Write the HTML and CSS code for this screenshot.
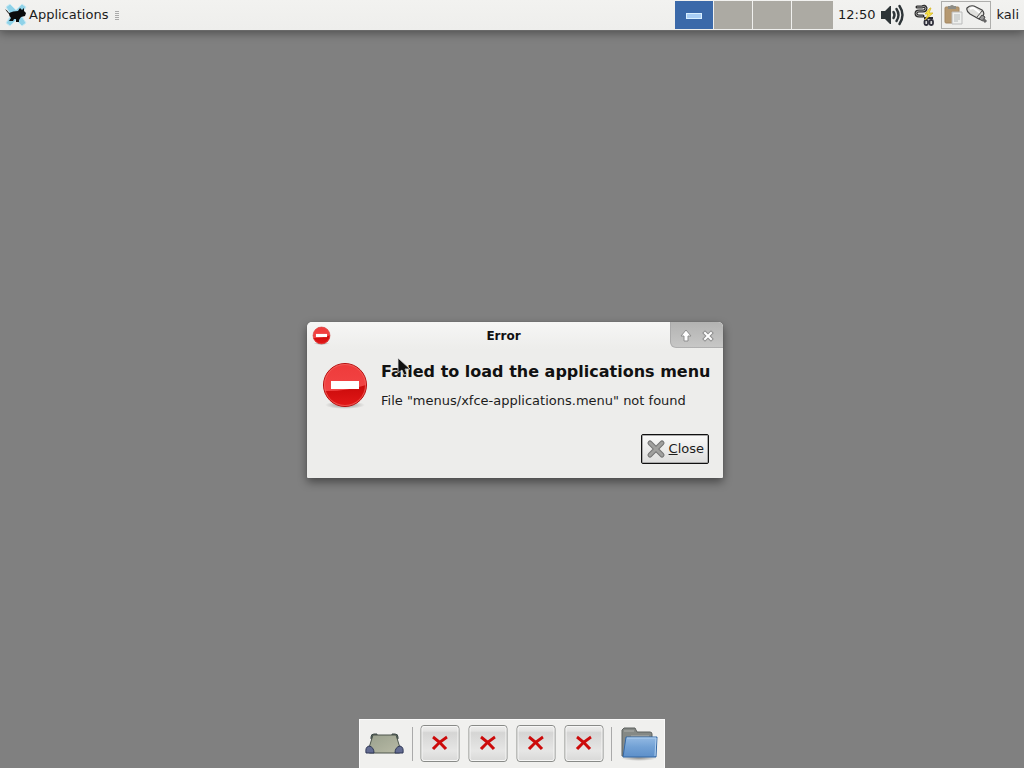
FILE: index.html
```html
<!DOCTYPE html>
<html lang="en">
<head>
<meta charset="utf-8">
<title>Desktop</title>
<link rel="stylesheet" href="styles.css">
</head>
<body>
<div class="desktop">
  <header class="panel">
    <button class="apps" type="button">
      <svg width="24" height="24" viewBox="0 0 24 24" aria-hidden="true">
        <path d="M1 4l4-3 6 6 6-6 4 3-5 8 5 8-4 3-6-6-6 6-4-3 5-8z" fill="#8fd2e8" stroke="#c9e9f3"/>
        <path d="M0 6q2 1 4 4 4-2 9-2l2-3 2 2 2-2v3l2 2-1 3-4 1-2 3v2h-3v-3H9l-1 2H4l2-3q-2-2-2-4Q2 9 0 6z" fill="#0b0b0b"/>
      </svg>
      <span>Applications</span>
    </button>
    <span class="grip"></span>
    <nav class="pager" aria-label="Workspaces">
      <button class="workspace current" type="button" aria-label="Workspace 1"><span class="mini-window"></span></button>
      <button class="workspace" type="button" aria-label="Workspace 2"></button>
      <button class="workspace" type="button" aria-label="Workspace 3"></button>
      <button class="workspace" type="button" aria-label="Workspace 4"></button>
    </nav>
    <time class="clock">12:50</time>
    <button class="tray-button" type="button" aria-label="Volume">
      <svg width="24" height="24" viewBox="0 0 24 24">
        <path d="M1 8h4l5-5h1v18h-1l-5-5H1z" fill="#2e3538"/>
        <g fill="none" stroke="#2e3538" stroke-width="2.400" stroke-linecap="round"><path d="M13.500 9q2 3 0 6"/><path d="M16.500 6q4 6 0 12"/><path d="M19.500 3q6 9 0 18"/></g>
      </svg>
    </button>
    <button class="tray-button power" type="button" aria-label="Power">
      <svg width="22" height="24" viewBox="0 0 22 24">
        <path d="M3 4h5q3-2 4 1 0 3-3 3H5q-3 0-3 2.500T5 13h4" fill="none" stroke="#292929" stroke-width="3" stroke-linecap="round"/>
        <path d="M3 4h5q3-2 4 1 0 3-3 3H5q-3 0-3 2.500T5 13h4" fill="none" stroke="#b5b5b5" stroke-width=".8"/>
        <path d="M10 15h9" stroke="#292933" stroke-width="2"/>
        <rect x="10.500" y="17" width="3.500" height="5" rx="1.500" fill="#ddd" stroke="#30303c" stroke-width="1.800"/>
        <rect x="15.500" y="17" width="3.500" height="5" rx="1.500" fill="#ddd" stroke="#30303c" stroke-width="1.800"/>
        <path d="M16 5l-5 6h3l-3 6 8-7h-4l2-5z" fill="#fbe645" stroke="#d5b522" stroke-width=".8"/>
      </svg>
    </button>
    <div class="tray">
      <svg width="20" height="22" viewBox="0 0 20 22" aria-hidden="true">
        <rect x="1" y="3" width="14" height="16" rx="1" fill="#b59870" stroke="#a38660"/>
        <path d="M4 4V2h2q2-2 4 0h2v3H4z" fill="#8c8c86"/>
        <path d="M8 8h10v12H8z" fill="#eeefed" stroke="#bbb"/>
        <path d="M10 11h6M10 13h6M10 15h6M10 17h4" stroke="#b4b8b8"/>
      </svg>
      <svg width="22" height="22" viewBox="0 0 22 22" aria-hidden="true">
        <path d="M1 4q3-3 7-2l8 4q3 3 1 6l-4 3-9-5Q0 7 1 4z" fill="#e0e0dd" stroke="#444" stroke-width="1.200"/>
        <path d="M4 5q3-2 5 0l5 4" fill="none" stroke="#fff" stroke-width="2"/>
        <path d="M16 7l-5 6" stroke="#555"/>
        <path d="M16 11l3 2-2 4-4-2z" fill="#999" stroke="#444"/>
        <path d="M17 15l3 3" stroke="#666" stroke-width="3"/>
      </svg>
    </div>
    <button class="user" type="button">kali</button>
  </header>

  <main class="workspace-area">
    <section class="dialog" role="alertdialog" aria-labelledby="dialog-title" aria-describedby="dialog-message">
      <div class="titlebar">
        <svg class="title-icon" viewBox="0 0 48 48" aria-hidden="true"><use href="#stop"/></svg>
        <h1 class="window-title" id="dialog-title">Error</h1>
        <div class="window-controls">
          <button class="control" type="button" aria-label="Shade">
            <svg width="14" height="14" viewBox="0 0 14 14"><path d="M7 2l5 6H9v5H5V8H2z" fill="#fff" stroke="#8e8e8e"/></svg>
          </button>
          <button class="control" type="button" aria-label="Close window">
            <svg width="14" height="14" viewBox="0 0 14 14"><path d="M4 5l6 6M10 5l-6 6" stroke="#8e8e8e" stroke-width="4" stroke-linecap="square"/><path d="M4 5l6 6M10 5l-6 6" stroke="#fff" stroke-width="2" stroke-linecap="square"/></svg>
          </button>
        </div>
      </div>
      <div class="dialog-body">
        <svg class="message-icon" width="48" height="48" viewBox="0 0 48 48" aria-hidden="true">
          <defs>
            <linearGradient id="red" x1="0" y1="0" x2="0" y2="1"><stop offset="0" stop-color="#ee3b3b"/><stop offset="1" stop-color="#f54a4a"/></linearGradient>
            <linearGradient id="deep" x1="0" y1="0" x2="0" y2="1"><stop offset="0" stop-color="#c80a0a"/><stop offset="1" stop-color="#e61a1a"/></linearGradient>
            <radialGradient id="shade"><stop offset="0" stop-opacity=".4"/><stop offset="1" stop-opacity="0"/></radialGradient>
            <clipPath id="disc"><circle cx="24" cy="24" r="21"/></clipPath>
          </defs>
          <g id="stop">
            <ellipse cx="24" cy="44" rx="20" ry="4" fill="url(#shade)"/>
            <circle cx="24" cy="24" r="21.500" fill="url(#red)" stroke="#b50e0e"/>
            <path d="M0 30q26 1 48-7v25H0z" fill="url(#deep)" clip-path="url(#disc)"/>
            <circle cx="24" cy="24" r="20.500" fill="none" stroke="#f36a62" stroke-opacity=".7"/>
            <path d="M10 20h28v8H10z" fill="#fff"/>
          </g>
        </svg>
        <div class="message">
          <h2 class="headline">Failed to load the applications menu</h2>
          <p class="detail" id="dialog-message">File "menus/xfce-applications.menu" not found</p>
        </div>
      </div>
      <div class="actions">
        <button class="close-button" type="button">
          <svg width="20" height="20" viewBox="0 0 20 20" aria-hidden="true"><path d="M4 4l12 12M16 4L4 16" stroke="#747474" stroke-width="5" stroke-linecap="round"/><path d="M4 4l12 12M16 4L4 16" stroke="#a0a09e" stroke-width="3" stroke-linecap="round"/></svg>
          <span><u>C</u>lose</span>
        </button>
      </div>
    </section>
    <svg class="cursor" width="14" height="20" viewBox="0 0 14 20" aria-hidden="true"><path d="M1 1v15l4-3 2 5 3-1-2-5h5z" fill="#111" stroke="#ddd" stroke-width=".8"/></svg>
  </main>

  <nav class="dock" aria-label="Launchers">
    <button class="launcher" type="button" aria-label="Show desktop">
      <svg width="40" height="40" viewBox="0 0 40 40">
        <defs><linearGradient id="desk" x1="0" y1="0" x2="1" y2="1"><stop offset="0" stop-color="#99a08d"/><stop offset="1" stop-color="#b9bba6"/></linearGradient></defs>
        <path d="M6 13q0-3 3-3h3v5H6zM33 13q0-3-3-3h-3v5h6z" fill="#596762" stroke="#3c4946"/>
        <path d="M8 11h23l5 16q0 2-2 2H5q-2 0-2-2z" fill="url(#desk)" stroke="#4c554c"/>
        <path d="M1 29q-1-6 3-7 5 1 5 7zM38 29q1-6-3-7-5 1-5 7z" fill="#626b91" stroke="#303957"/>
      </svg>
    </button>
    <span class="separator"></span>
    <button class="launcher" type="button" aria-label="Launcher 1"><svg width="40" height="40" viewBox="0 0 40 40">
      <defs><linearGradient id="tile" x1="0" y1="0" x2="0" y2="1"><stop offset="0" stop-color="#eeeeec"/><stop offset=".15" stop-color="#e4e4e3"/><stop offset=".2" stop-color="#d5d5d4"/><stop offset=".7" stop-color="#e6e6e5"/><stop offset="1" stop-color="#d8d8d7"/></linearGradient></defs>
      <g id="missing"><rect x="1" y="1.500" width="38" height="36" rx="3" fill="url(#tile)" stroke="#888a87"/><rect x="2" y="2.500" width="36" height="34" rx="2" fill="none" stroke="#f6f6f5"/><path d="M13 13q7 5 13 12M27 13q-8 5-14 12" fill="none" stroke="#cc0b0b" stroke-width="3"/></g>
    </svg></button>
    <button class="launcher" type="button" aria-label="Launcher 2"><svg width="40" height="40" viewBox="0 0 40 40"><use href="#missing"/></svg></button>
    <button class="launcher" type="button" aria-label="Launcher 3"><svg width="40" height="40" viewBox="0 0 40 40"><use href="#missing"/></svg></button>
    <button class="launcher" type="button" aria-label="Launcher 4"><svg width="40" height="40" viewBox="0 0 40 40"><use href="#missing"/></svg></button>
    <span class="separator"></span>
    <button class="launcher" type="button" aria-label="Files">
      <svg width="40" height="40" viewBox="0 0 40 40">
        <defs><linearGradient id="folder" x1="0" y1="0" x2="0" y2="1"><stop offset="0" stop-color="#94bae3"/><stop offset=".5" stop-color="#72a1d5"/><stop offset="1" stop-color="#5d8fc9"/></linearGradient></defs>
        <ellipse cx="20" cy="34" rx="18" ry="3" fill="url(#shade)"/>
        <path d="M3 32V6l2-2h11l2 4h13q2 0 2 2v22z" fill="#858985" stroke="#5d605e"/>
        <path d="M12 12h18M5 7h10" stroke="#adafac"/>
        <path d="M7 13h31l-1 20H4z" fill="url(#folder)" stroke="#3568a4"/>
        <path d="M8 14h29l-1 18" fill="none" stroke="#b1d0ef"/>
      </svg>
    </button>
  </nav>
</div>
</body>
</html>
```
FILE: styles.css
```css
* {
  box-sizing: border-box;
}

body {
  margin: 0;
  font: 13px/16px "DejaVu Sans", Verdana, sans-serif;
  color: #1c1c1c;
}

button {
  margin: 0;
  padding: 0;
  border: 0;
  background: none;
  font: inherit;
  color: inherit;
}

svg {
  display: block;
  flex: none;
}

.desktop {
  display: flex;
  flex-direction: column;
  min-height: 100vh;
  background: #808080;
}

.panel {
  display: flex;
  align-items: center;
  height: 30px;
  padding: 0 5px;
  background: linear-gradient(#f2f2f0, #eeeeec);
  box-shadow: 0 1px 0 #696969, 0 3px 9px rgba(0, 0, 0, 0.4);
}

.apps {
  display: flex;
  align-items: center;
}

.grip {
  width: 4px;
  height: 9px;
  margin-left: 7px;
  background: repeating-linear-gradient(#aaa 0 1px, transparent 1px 2px);
}

.pager {
  display: grid;
  grid-template-columns: repeat(3, 38px) 1fr;
  gap: 1px;
  width: 158px;
  height: 28px;
  margin-left: auto;
}

.workspace {
  display: flex;
  align-items: center;
  justify-content: center;
  background: #acaaa3;
}

.workspace.current {
  background: #3b69a9;
}

.mini-window {
  width: 16px;
  height: 6px;
  margin-top: 2px;
  border: 1px solid #d9efff;
  background: #a9cef5;
}

.clock {
  margin-left: 5px;
}

.tray-button {
  margin-left: 4px;
}

.tray-button.power {
  margin-left: 10px;
}

.tray {
  display: flex;
  align-items: center;
  justify-content: center;
  gap: 2px;
  width: 50px;
  height: 28px;
  margin: 0 6px 0 5px;
  border: 1px solid #aeaeac;
}

.workspace-area {
  flex: 1;
  position: relative;
}

.dialog {
  position: absolute;
  left: 307px;
  top: 292px;
  width: 416px;
  border-radius: 5px 5px 1px 1px;
  background: #ededeb;
  box-shadow: 0 0 1px #555, 0 4px 10px rgba(0, 0, 0, 0.45);
}

.titlebar {
  display: flex;
  align-items: center;
  gap: 6px;
  height: 27px;
  padding-left: 5px;
  border-radius: 5px 5px 0 0;
  background: linear-gradient(#f6f6f5, #ededeb);
}

.title-icon {
  width: 19px;
  height: 19px;
}

.window-title {
  flex: 1;
  margin: 0;
  padding-left: 6px;
  font-size: 12px;
  text-align: center;
  color: #111;
}

.window-controls {
  display: flex;
  align-items: center;
  gap: 8px;
  height: 26px;
  align-self: flex-start;
  padding: 0 8px;
  border-left: 1px solid #aaa;
  border-bottom: 1px solid #b0b0b0;
  border-radius: 0 5px 0 6px;
  background: linear-gradient(#b3b3b2, #c7c7c6);
}

.dialog-body {
  display: flex;
  gap: 12px;
  padding: 12px 14px 0;
}

.message {
  padding-top: 1px;
  white-space: nowrap;
}

.headline {
  margin: 0;
  font-size: 16px;
  line-height: 20px;
  color: #111;
}

.detail {
  margin: 11px 0 0;
}

.actions {
  display: flex;
  justify-content: flex-end;
  padding: 25px 14px 14px;
}

.close-button {
  display: flex;
  align-items: center;
  gap: 3px;
  height: 30px;
  padding: 0 4px;
  border: 1px solid #111;
  border-radius: 2px;
  background: linear-gradient(#fafaf9, #dededd);
  box-shadow: inset 0 0 0 1px #aaa;
}

.cursor {
  position: absolute;
  left: 397px;
  top: 327px;
}

.dock {
  display: flex;
  align-items: center;
  align-self: center;
  gap: 8px;
  height: 49px;
  padding: 0 5px;
  border: 1px solid #fafafa;
  border-bottom: 0;
  background: #f0f0ee;
}

.separator {
  width: 1px;
  height: 34px;
  margin: 0 -1px;
  background: #aaa;
}
```
